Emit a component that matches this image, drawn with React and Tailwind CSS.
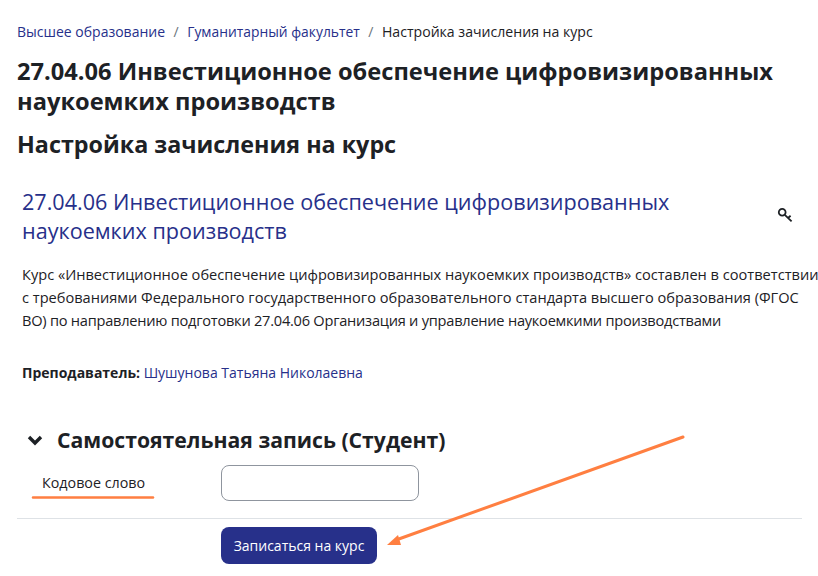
const FONT = "font-['Open_Sans','Noto_Sans',sans-serif]";

function KeyIcon() {
  return (
    <svg className="mt-[20px] mr-[9px]" width="16" height="16" viewBox="0 0 16 16" fill="none" stroke="#1d2125" strokeWidth="1.8">
      <circle cx="5.2" cy="5.2" r="3.4" />
      <path d="M7.8 7.8L14.6 14.4M11 11L13.6 8.8" />
    </svg>
  );
}

export default function App() {
  return (
    <div className={`relative w-[818px] h-[576px] overflow-hidden bg-white text-[#1d2125] ${FONT}`}>
      <div className="pl-[17px] pr-4 pt-[22px]">
        {/* Breadcrumb */}
        <nav className="flex items-center gap-[8.5px] text-[14px] leading-[20px] text-[#6a737b]">
          <a className="text-[#27308a]">Высшее образование</a>
          <span>/</span>
          <a className="text-[13.85px] text-[#27308a]">Гуманитарный факультет</a>
          <span>/</span>
          <span className="text-[14.1px] text-[#1d2125]">Настройка зачисления на курс</span>
        </nav>

        <h1 className="mt-[14px] text-[23.65px] leading-[30px] font-bold">
          27.04.06 Инвестиционное обеспечение цифровизированных наукоемких производств
        </h1>
        <h2 className="mt-[13px] text-[23.3px] leading-[30px] font-bold">Настройка зачисления на курс</h2>

        {/* Course box */}
        <div className="mt-[28px] pl-[5px]">
          <div className="flex items-start justify-between">
            <h3 className="w-[700px] text-[21.6px] leading-[29px] text-[#27308a]">
              27.04.06 Инвестиционное обеспечение цифровизированных наукоемких производств
            </h3>
            <KeyIcon />
          </div>
          <p className="mt-[18px] w-[799px] text-[14.6px] leading-[23px]">
            Курс «Инвестиционное обеспечение цифровизированных наукоемких производств» составлен в соответствии с требованиями Федерального государственного образовательного стандарта высшего образования (ФГОС <span className="tracking-[-0.24px]">ВО) по направлению подготовки 27.04.06 Организация и управление наукоемкими производствами</span>
          </p>
          <p className="mt-[30px] text-[14px] leading-[22px]">
            <b>Преподаватель:</b> <a className="text-[#27308a]">Шушунова Татьяна Николаевна</a>
          </p>
        </div>

        {/* Enrol form */}
        <div className="mt-[42px] flex items-center pl-[8px]">
          <svg width="20" height="20" viewBox="0 0 20 20" fill="none" stroke="#1d2125" strokeWidth="3.4">
            <path d="M4 7L10 13L16 7" />
          </svg>
          <h3 className="ml-[12px] text-[21.2px] leading-[28px] font-bold">Самостоятельная запись (Студент)</h3>
        </div>
        <div className="mt-[11px] flex items-center">
          <label className="w-[204px] pl-[25px] text-[14.3px] text-[#1d2125]">Кодовое слово</label>
          <input className="w-[198px] h-[36px] rounded-lg border border-[#8f959e] bg-white" />
        </div>
        <div className="mt-[17px] border-t border-[#dee2e6] pt-[8px] pl-[204px]">
          <button className="h-[37px] w-[156px] rounded-lg bg-[#27308a] text-[14px] text-white">Записаться на курс</button>
        </div>
      </div>

      {/* Annotation drawn on top of the screenshot */}
      <svg className="absolute inset-0 pointer-events-none" width="818" height="576" fill="none">
        <path d="M33 497.5H153" stroke="#ff7f41" strokeWidth="2.5" strokeLinecap="round" />
        <path d="M683 437L396 540" stroke="#ff7f41" strokeWidth="3" strokeLinecap="round" />
        <path d="M387 545L398 535L401 545Z" fill="#ff7f41" />
      </svg>
    </div>
  );
}
